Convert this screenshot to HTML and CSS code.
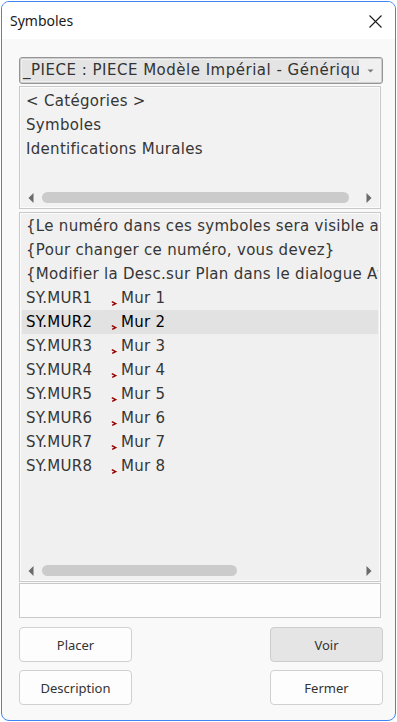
FILE: index.html
```html
<!DOCTYPE html>
<html lang="fr">
<head>
<meta charset="utf-8">
<title>Symboles</title>
<link rel="stylesheet" href="styles.css">
</head>
<body>
<div class="window">
  <div class="titlebar">
    <span class="title">Symboles</span>
    <svg class="close" width="13" height="13" viewBox="0 0 13 13"><path d="M0.5 0.5 L12.5 12.5 M12.5 0.5 L0.5 12.5" stroke="#1a1a1a" stroke-width="1.1" fill="none"/></svg>
  </div>
  <div class="content">
    <div class="combo">
      <span class="combo-text">_PIECE : PIECE Modèle Impérial - Générique</span>
      <span class="combo-btn"><svg width="7" height="4" viewBox="0 0 7 4"><path d="M0.5 0.5 L6.5 0.5 L3.5 3.5 Z" fill="#7a7a7a"/></svg></span>
    </div>

    <div class="list list-cat">
      <div class="items">
        <div class="item">&lt; Catégories &gt;</div>
        <div class="item">Symboles</div>
        <div class="item">Identifications Murales</div>
      </div>
      <div class="hscroll">
        <span class="arrow"><svg width="6" height="10" viewBox="0 0 6 10"><path d="M5.5 0 L5.5 10 L0.5 5 Z" fill="#6a6a6a"/></svg></span>
        <div class="track"><div class="thumb thumb-cat"></div></div>
        <span class="arrow"><svg width="6" height="10" viewBox="0 0 6 10"><path d="M0.5 0 L0.5 10 L5.5 5 Z" fill="#6a6a6a"/></svg></span>
      </div>
    </div>

    <div class="list list-main">
      <div class="items">
        <div class="item">{Le numéro dans ces symboles sera visible après placement}</div>
        <div class="item">{Pour changer ce numéro, vous devez}</div>
        <div class="item">{Modifier la Desc.sur Plan dans le dialogue Attributs}</div>
        <div class="item sym"><span class="code">SY.MUR1</span><svg class="mark" width="6" height="5" viewBox="0 0 6 5"><path d="M0.8 0.6 L4.6 2.6 L1.2 4.4" stroke="#9b0000" stroke-width="1.4" fill="none"/></svg><span>Mur 1</span></div>
        <div class="item sym selected"><span class="code">SY.MUR2</span><svg class="mark" width="6" height="5" viewBox="0 0 6 5"><path d="M0.8 0.6 L4.6 2.6 L1.2 4.4" stroke="#9b0000" stroke-width="1.4" fill="none"/></svg><span>Mur 2</span></div>
        <div class="item sym"><span class="code">SY.MUR3</span><svg class="mark" width="6" height="5" viewBox="0 0 6 5"><path d="M0.8 0.6 L4.6 2.6 L1.2 4.4" stroke="#9b0000" stroke-width="1.4" fill="none"/></svg><span>Mur 3</span></div>
        <div class="item sym"><span class="code">SY.MUR4</span><svg class="mark" width="6" height="5" viewBox="0 0 6 5"><path d="M0.8 0.6 L4.6 2.6 L1.2 4.4" stroke="#9b0000" stroke-width="1.4" fill="none"/></svg><span>Mur 4</span></div>
        <div class="item sym"><span class="code">SY.MUR5</span><svg class="mark" width="6" height="5" viewBox="0 0 6 5"><path d="M0.8 0.6 L4.6 2.6 L1.2 4.4" stroke="#9b0000" stroke-width="1.4" fill="none"/></svg><span>Mur 5</span></div>
        <div class="item sym"><span class="code">SY.MUR6</span><svg class="mark" width="6" height="5" viewBox="0 0 6 5"><path d="M0.8 0.6 L4.6 2.6 L1.2 4.4" stroke="#9b0000" stroke-width="1.4" fill="none"/></svg><span>Mur 6</span></div>
        <div class="item sym"><span class="code">SY.MUR7</span><svg class="mark" width="6" height="5" viewBox="0 0 6 5"><path d="M0.8 0.6 L4.6 2.6 L1.2 4.4" stroke="#9b0000" stroke-width="1.4" fill="none"/></svg><span>Mur 7</span></div>
        <div class="item sym"><span class="code">SY.MUR8</span><svg class="mark" width="6" height="5" viewBox="0 0 6 5"><path d="M0.8 0.6 L4.6 2.6 L1.2 4.4" stroke="#9b0000" stroke-width="1.4" fill="none"/></svg><span>Mur 8</span></div>
      </div>
      <div class="hscroll">
        <span class="arrow"><svg width="6" height="10" viewBox="0 0 6 10"><path d="M5.5 0 L5.5 10 L0.5 5 Z" fill="#6a6a6a"/></svg></span>
        <div class="track"><div class="thumb thumb-main"></div></div>
        <span class="arrow"><svg width="6" height="10" viewBox="0 0 6 10"><path d="M0.5 0 L0.5 10 L5.5 5 Z" fill="#6a6a6a"/></svg></span>
      </div>
    </div>

    <div class="field"></div>

    <div class="buttons">
      <button class="btn">Placer</button>
      <span></span>
      <button class="btn pressed">Voir</button>
      <button class="btn">Description</button>
      <span></span>
      <button class="btn">Fermer</button>
    </div>
  </div>
</div>
</body>
</html>
```

FILE: styles.css
```css
* { box-sizing: border-box; }

html, body {
  margin: 0;
  padding: 0;
  background: #ffffff;
}

.window {
  margin: 1px 0 0 1px;
  width: 395px;
  height: 720px;
  border: 1px solid #3f84f2;
  border-radius: 8px;
  background: #f9f9f9;
  overflow: hidden;
  display: flex;
  flex-direction: column;
}

.titlebar {
  height: 37px;
  flex: none;
  background: #ffffff;
  display: flex;
  align-items: center;
  justify-content: space-between;
  padding: 0 13px 1px 8px;
}

.title {
  font-family: "Noto Sans", "Open Sans", sans-serif;
  font-size: 14px;
  color: #1a1a1a;
}

.close { display: block; margin-top: 2px; }

.content {
  padding: 18px 12px 0 17px;
  display: flex;
  flex-direction: column;
}

.combo {
  height: 27px;
  border: 1px solid #959595;
  border-radius: 3px;
  box-shadow: inset 0 0 0 1px #cfcfcf;
  background: #f0f0f0;
  display: flex;
  align-items: stretch;
  padding: 2px;
  overflow: hidden;
}

.combo-text {
  width: 337px;
  flex: none;
  background: #e4e4e4;
  font-family: "DejaVu Sans", sans-serif;
  font-size: 15px;
  letter-spacing: 0.5px;
  color: #333333;
  line-height: 21px;
  white-space: nowrap;
  overflow: hidden;
  padding-left: 1px;
}

.combo-btn {
  flex: 1;
  display: flex;
  align-items: center;
  justify-content: center;
  padding-left: 2px;
}

.combo-btn svg { display: block; }

.list {
  width: 362px;
  border: 1px solid #c9c9c9;
  box-shadow: inset 0 0 0 1px #fbfbfb;
  display: flex;
  flex-direction: column;
  overflow: hidden;
}

.list-cat {
  margin-top: 2px;
  height: 123px;
  background: #f2f2f2;
}

.list-main {
  margin-top: 3px;
  height: 370px;
  background: #f0f0f0;
}

.items {
  flex: 1;
  margin: 0 2px;
  overflow: hidden;
  font-family: "DejaVu Sans", sans-serif;
  font-size: 15px;
  letter-spacing: 0.3px;
  color: #363636;
}

.list-cat .items { padding-top: 2px; }
.list-main .items { padding-top: 1px; }

.item {
  height: 24px;
  line-height: 24px;
  padding-left: 4px;
  white-space: nowrap;
}

.sym {
  display: flex;
  align-items: center;
}

.code { width: 85px; flex: none; }

.mark {
  display: block;
  flex: none;
  margin: 10px 4px 0 0;
}

.selected {
  background: #e2e2e2;
  color: #000000;
}

.hscroll {
  height: 17px;
  flex: none;
  margin-bottom: 2px;
  display: flex;
  align-items: center;
}

.arrow {
  width: 22px;
  flex: none;
  display: flex;
  justify-content: center;
}

.arrow svg { display: block; }

.track {
  flex: 1;
  height: 11px;
}

.thumb {
  height: 11px;
  background: #cbcbcb;
  border-radius: 6px;
}

.thumb-cat { width: 307px; }
.thumb-main { width: 195px; }

.field {
  margin-top: 1px;
  width: 362px;
  height: 35px;
  background: #fdfdfd;
  border: 1px solid #c9c9c9;
}

.buttons {
  margin-top: 9px;
  display: grid;
  grid-template-columns: 113px 1fr 113px;
  row-gap: 8px;
}

.btn {
  height: 35px;
  margin: 0;
  padding: 0;
  border: 1px solid #d0d0d0;
  border-radius: 4px;
  background: #fdfdfd;
  font-family: "Noto Sans", "Open Sans", sans-serif;
  font-size: 13px;
  color: #333333;
  cursor: default;
}

.pressed {
  background: #e5e5e5;
  border-color: #cdcdcd;
}
```
